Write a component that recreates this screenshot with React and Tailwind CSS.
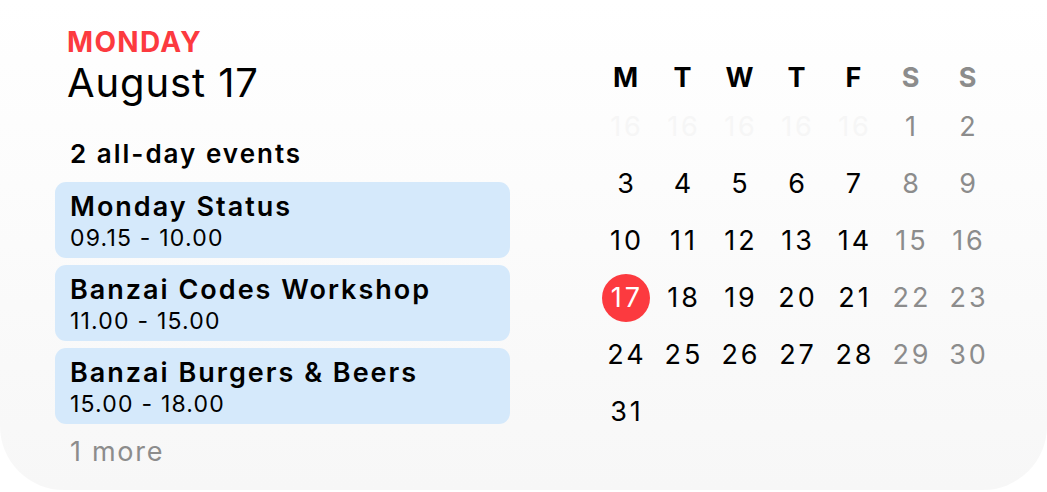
const events = [
  { title: 'Monday Status', time: '09.15 - 10.00' },
  { title: 'Banzai Codes Workshop', time: '11.00 - 15.00' },
  { title: 'Banzai Burgers & Beers', time: '15.00 - 18.00' },
]

const heads = ['M', 'T', 'W', 'T', 'F', 'S', 'S']

// null = faint leftover cell from the previous month
const days = [
  null, null, null, null, null, 1, 2,
  3, 4, 5, 6, 7, 8, 9,
  10, 11, 12, 13, 14, 15, 16,
  17, 18, 19, 20, 21, 22, 23,
  24, 25, 26, 27, 28, 29, 30,
  31,
]

function DayCell({ day, index }) {
  const weekend = index % 7 >= 5
  if (day === null) {
    return <div className="flex items-center justify-center pl-[3px] text-[27px] tracking-[3px] leading-[57px] text-[#f6f6f6]">16</div>
  }
  if (day === 17) {
    return (
      <div className="flex items-center justify-center">
        <div className="flex h-[48px] w-[48px] items-center justify-center rounded-full bg-[#fc3a3f] pl-[3px] text-[27px] tracking-[3px] leading-none text-white">
          17
        </div>
      </div>
    )
  }
  return (
    <div className={'flex items-center justify-center pl-[3px] text-[27px] tracking-[3px] leading-[57px] ' + (weekend ? 'text-[#8c8c8c]' : 'text-black')}>
      {day}
    </div>
  )
}

export default function App() {
  return (
    <div className="h-[492px] w-[1047px] overflow-hidden bg-white font-['Inter',sans-serif]">
      <div className="flex h-[490px] rounded-b-[64px] bg-gradient-to-b from-white to-[#f7f7f7]">
        <div className="flex w-[510px] flex-col pl-[55px] pt-[25px]">
          <div className="ml-[12px] text-[28px] font-bold tracking-[1.3px] leading-[34px] text-[#fc3a3f]">MONDAY</div>
          <div className="ml-[12px] text-[40px] tracking-[0.9px] leading-[48px] text-black">August 17</div>
          <div className="ml-[15px] mt-[31px] text-[26px] font-semibold tracking-[2px] leading-[32px] text-black">2 all-day events</div>
          <div className="mt-[12px] flex flex-col gap-[7px]">
            {events.map((e) => (
              <div key={e.title} className="h-[76px] rounded-[11px] bg-[#d5e9fb] pl-[15px] pt-[9px]">
                <div className="text-[27px] font-semibold tracking-[2px] leading-[32px] text-black">{e.title}</div>
                <div className="mt-[1px] text-[23px] tracking-[1.2px] leading-[28px] text-black">{e.time}</div>
              </div>
            ))}
          </div>
          <div className="ml-[15px] mt-[12px] text-[27px] tracking-[1.7px] leading-[32px] text-[#8c8c8c]">1 more</div>
        </div>
        <div className="ml-[87px] pt-[58px]">
          <div className="grid h-[40px] grid-cols-[repeat(7,57px)]">
            {heads.map((h, i) => (
              <div key={i} className={'flex items-center justify-center text-[27px] font-bold leading-[40px] ' + (i >= 5 ? 'text-[#8c8c8c]' : 'text-black')}>
                {h}
              </div>
            ))}
          </div>
          <div className="grid grid-cols-[repeat(7,57px)] auto-rows-[57px]">
            {days.map((d, i) => (
              <DayCell key={i} day={d} index={i} />
            ))}
          </div>
        </div>
      </div>
    </div>
  )
}
